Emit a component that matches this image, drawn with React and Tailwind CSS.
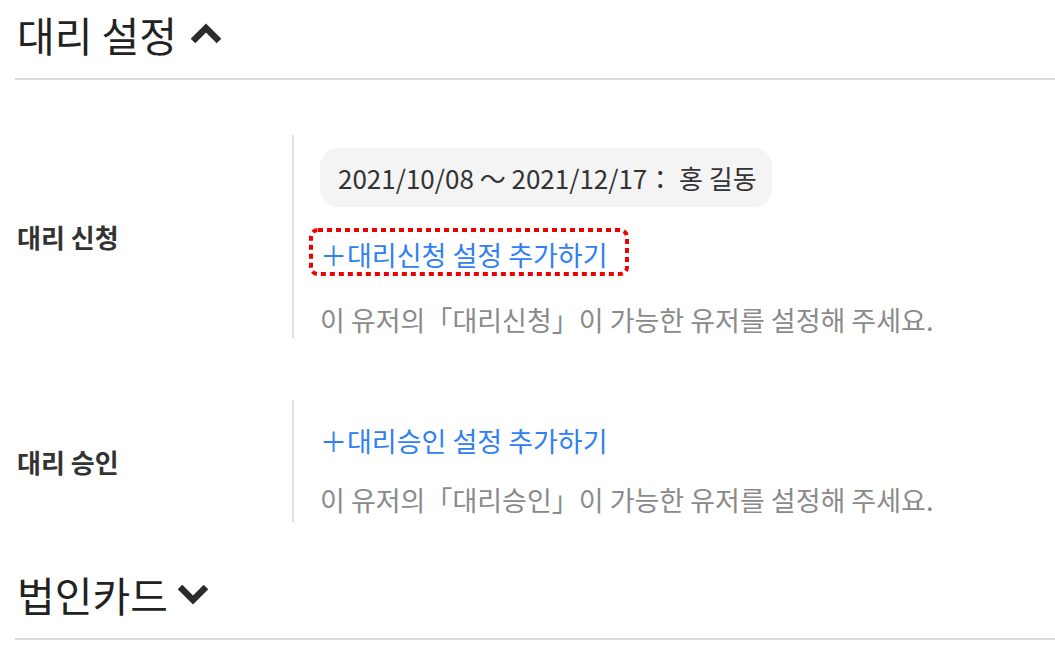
import React from "react";

const FONT = { fontFamily: '"Noto Sans CJK KR", "Noto Sans", sans-serif' };

const Chevron = ({ up = false }) => (
  <svg width="34" height="22" viewBox="0 0 34 22" className="shrink-0">
    <polyline
      points={up ? "4,18 17,5 30,18" : "4,4 17,17 30,4"}
      fill="none"
      stroke="#2b2b2b"
      strokeWidth="6.5"
      strokeLinecap="butt"
      strokeLinejoin="miter"
    />
  </svg>
);

const SectionHeader = ({ title, open, gap = "gap-3" }) => (
  <div className="h-[80px] border-b-2 border-[#d9d9d9]">
    <div className={`flex items-center h-[68px] ${gap} pl-[2px]`}>
      <h2 className="text-[41px] leading-none text-[#222] font-normal">{title}</h2>
      <Chevron up={open} />
    </div>
  </div>
);

const AddLink = ({ children, highlighted }) => (
  <div className="relative inline-block">
    <button className="text-[27px] leading-[32px] text-[#2f80f5]">
      ＋{children}
    </button>
    {highlighted && (
      <svg
        className="absolute left-[-11px] top-[-11px] pointer-events-none"
        width="320"
        height="48"
        viewBox="0 0 320 48"
      >
        <rect
          x="2"
          y="2"
          width="316"
          height="44"
          rx="7"
          fill="none"
          stroke="#ee0000"
          strokeWidth="4"
          strokeDasharray="5 4"
        />
      </svg>
    )}
  </div>
);

const Row = ({ label, children, className = "" }) => (
  <div className={`flex items-center ${className}`}>
    <div className="w-[277px] pl-[2px] text-[26px] font-bold text-[#333]">{label}</div>
    <div className="flex-1 border-l-2 border-[#e3e3e3] pl-[26px]">{children}</div>
  </div>
);

export default function App() {
  return (
    <div className="w-[1055px] h-[655px] bg-white overflow-hidden pl-[15px]" style={FONT}>
      <SectionHeader title="대리 설정" open />

      {/* 대리 신청 */}
      <Row label="대리 신청" className="mt-[55px]">
        <div className="pt-[13px] pb-[2px]">
          <div className="inline-flex items-center h-[59px] pl-[18px] pr-[15px] rounded-[18px] bg-[#f4f4f4] text-[26px] text-[#333]">
            2021/10/08 〜 2021/12/17： 홍 길동
          </div>
          <div className="mt-[32px]">
            <AddLink highlighted>대리신청 설정 추가하기</AddLink>
          </div>
          <p className="mt-[33px] text-[27px] leading-[32px] text-[#8a8a8a]">
            이 유저의「대리신청」이 가능한 유저를 설정해 주세요.
          </p>
        </div>
      </Row>

      {/* 대리 승인 */}
      <Row label="대리 승인" className="mt-[62px]">
        <div className="pt-[25px] pb-[6px]">
          <AddLink>대리승인 설정 추가하기</AddLink>
          <p className="mt-[27px] text-[27px] leading-[32px] text-[#8a8a8a]">
            이 유저의「대리승인」이 가능한 유저를 설정해 주세요.
          </p>
        </div>
      </Row>

      <div className="mt-[38px]">
        <SectionHeader title="법인카드" open={false} gap="gap-[8px]" />
      </div>
    </div>
  );
}
